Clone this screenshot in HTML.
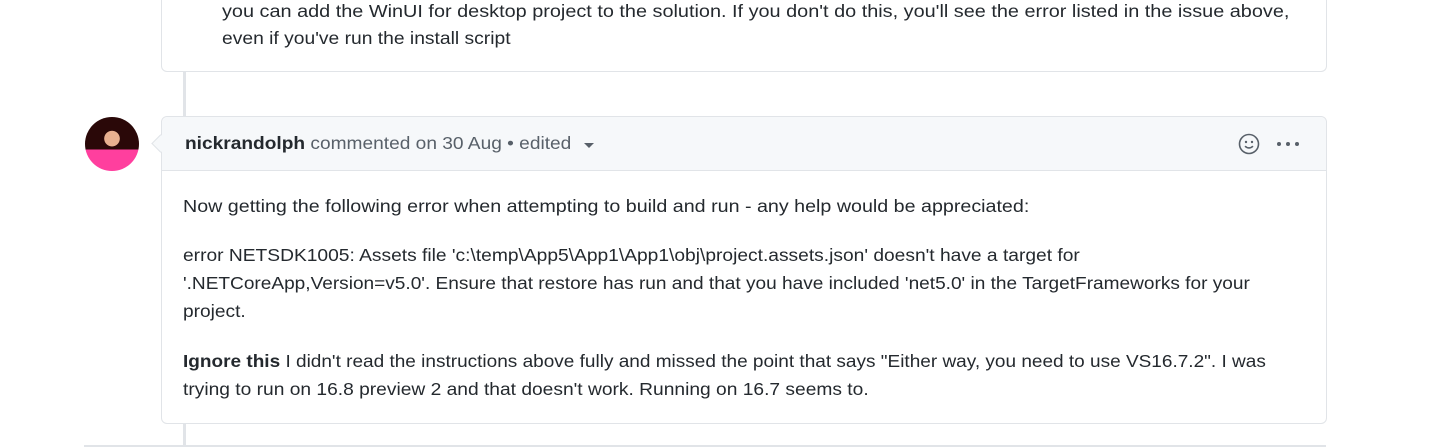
<!DOCTYPE html>
<html><head><style>
body{margin:0;width:1454px;height:447px;background:#fff;position:relative;overflow:hidden;font-family:"Liberation Sans",sans-serif;color:#24292e}
.box{position:absolute;left:161px;width:1164px;border:1px solid #e1e4e8;border-radius:6px;background:#fff}
.t{position:absolute;font-size:17.4px;line-height:28px;white-space:nowrap;transform:scaleX(1.135);transform-origin:0 0}
.line{position:absolute;left:183px;width:3px;background:#e1e4e8}
</style></head><body>
<div class="box" style="top:-10px;height:81px;border-top:none;border-radius:0 0 6px 6px"></div>
<div class="t" style="left:222px;top:-3px;transform:scaleX(1.142)">you can add the WinUI for desktop project to the solution. If you don't do this, you'll see the error listed in the issue above,</div>
<div class="t" style="left:222px;top:24px;transform:scaleX(1.108)">even if you've run the install script</div>
<div class="line" style="top:72px;height:44px"></div>
<div class="line" style="top:424px;height:23px"></div>
<div style="position:absolute;left:84px;top:445px;width:1242px;height:2px;background:#e1e4e8"></div>
<div style="position:absolute;left:85px;top:117px;width:54px;height:54px;border-radius:50%;background:radial-gradient(circle at 50% 40%,#e8b090 0 18%,transparent 19%),linear-gradient(#2a0808 0 60%,#ff3f9e 60%)"></div>
<div class="box" style="top:116px;height:306px">
 <div style="height:53px;background:#f6f8fa;border-bottom:1px solid #e1e4e8;border-radius:6px 6px 0 0"></div>
</div>
<div style="position:absolute;left:154px;top:137px;width:12px;height:12px;background:#f6f8fa;border-left:1px solid #e1e4e8;border-bottom:1px solid #e1e4e8;transform:rotate(45deg)"></div>
<div class="t" style="left:185px;top:129px;color:#586069;transform:scaleX(1.1)"><b style="color:#24292e">nickrandolph</b> commented on 30 Aug • edited</div>
<div style="position:absolute;left:584px;top:143px;border:5px solid transparent;border-top:5px solid #586069;border-bottom:none"></div>
<svg style="position:absolute;left:1238px;top:133px" width="22" height="22" viewBox="0 0 22 22"><circle cx="11" cy="11" r="9.5" fill="none" stroke="#586069" stroke-width="1.6"/><circle cx="8" cy="9" r="1.2" fill="#586069"/><circle cx="14" cy="9" r="1.2" fill="#586069"/><path d="M7 13.2q4 3.5 8 0" fill="none" stroke="#586069" stroke-width="1.6"/></svg>
<svg style="position:absolute;left:1275px;top:140px" width="26" height="8"><circle cx="4" cy="4" r="2" fill="#586069"/><circle cx="13" cy="4" r="2" fill="#586069"/><circle cx="22" cy="4" r="2" fill="#586069"/></svg>
<div class="t" style="left:183px;top:192px;transform:scaleX(1.131)">Now getting the following error when attempting to build and run - any help would be appreciated:</div>
<div class="t" style="left:183px;top:241px;transform:scaleX(1.104)">error NETSDK1005: Assets file 'c:\temp\App5\App1\App1\obj\project.assets.json' doesn't have a target for</div>
<div class="t" style="left:183px;top:269px;transform:scaleX(1.096)">'.NETCoreApp,Version=v5.0'. Ensure that restore has run and that you have included 'net5.0' in the TargetFrameworks for your</div>
<div class="t" style="left:183px;top:297px;transform:scaleX(1.1)">project.</div>
<div class="t" style="left:183px;top:347px;transform:scaleX(1.093)"><b>Ignore this</b> I didn't read the instructions above fully and missed the point that says "Either way, you need to use VS16.7.2". I was</div>
<div class="t" style="left:183px;top:375px;transform:scaleX(1.104)">trying to run on 16.8 preview 2 and that doesn't work. Running on 16.7 seems to.</div>
</body></html>
